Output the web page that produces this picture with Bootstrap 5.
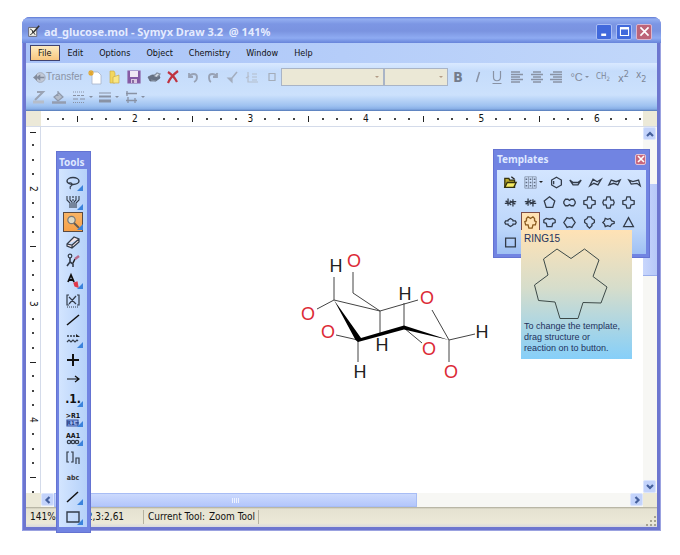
<!DOCTYPE html>
<html lang="en">
<head>
<meta charset="utf-8">
<meta name="viewport" content="width=device-width, initial-scale=1">
<title>ad_glucose.mol - Symyx Draw 3.2</title>
<link href="https://cdn.jsdelivr.net/npm/bootstrap@5.3.0/dist/css/bootstrap.min.css" rel="stylesheet">
<style>
body{font-family:"DejaVu Sans Condensed","DejaVu Sans",sans-serif;font-size:9px;line-height:12px;color:#111;background:#fff;min-height:100vh;padding:17px 19px 24px 22px}
button{border:0;background:none;padding:0;color:inherit;display:flex;align-items:center;justify-content:center}
svg{display:block}
.ic{width:16px;height:16px;fill:none;stroke:#333c4a;stroke-width:1.2;overflow:visible}
.app-window{padding:0 4px 4px;background:#6d76cf;border-radius:8px 8px 0 0;box-shadow:inset 1px 0 #8d9bec,inset -1px -1px #9ba2e0}
.titlebar{height:26px;margin:0 -4px;padding:3px 5px 0 5px;border-radius:8px 8px 0 0;background:linear-gradient(#5c78d4 0,#93aef0 2px,#7c96e4 7px,#7a93e0 14px,#8eabf2 21px,#6784da 26px)}
.titlebar .ic,.transfer .ic{width:13px;height:13px}
.win-title{font:bold 11px/16px "Noto Sans",sans-serif;color:#e4ebff;margin:0;white-space:pre}
.winbtn{width:16px;height:16px;border:1px solid #a9bdf4;border-radius:2px;background:#4169dc}
.winbtn.shut{background:#bd6478;border-color:#d9b6cf}
.menus{height:20px;background:linear-gradient(90deg,#a9c3f8,#c1d7fa);padding:2px 0 2px 4px}
.menus a{color:#111;text-decoration:none;padding:0 7px;border:1px solid transparent;line-height:14px}
.menus a.on{background:linear-gradient(#fdebc0,#f8c77f);border-color:#40426e}
.tools-strip{height:48px;padding:4px 5px 0;background:linear-gradient(#d9e9ff 0,#c5dcfb 8px,#cce1fc 32px,#9dc1f0 43px,#87aee6 46px,#5478b5 48px);color:#8a93a5}
.tools-strip .ic{stroke:#8992a4}
.row-a,.row-b{height:20px}
.transfer{width:54px;font:10px/12px "Liberation Sans",sans-serif}
.set-a{display:grid;grid-template-columns:repeat(10,1fr);width:197px}
.set-b{display:grid;grid-template-columns:repeat(6,1fr) 27px repeat(3,1fr);width:204px}
.pick{appearance:none;height:18px;border:1px solid #a9b4c6;border-radius:0;background:#ebe8d6;opacity:1}
.pick.wide{width:103px}
.pick.slim{width:64px}
.pick-wrap{position:relative}
.pick-wrap::after,.caret-s::after{content:"";border:2px solid transparent;border-top-color:#858ea0;border-bottom:0}
.pick-wrap::after{position:absolute;right:5px;top:8px;pointer-events:none;border-top-color:#b39b86}
.caret-s::after{margin-left:2px}
.glyph{font:11px/16px "Liberation Sans",sans-serif;color:#858d9d}
.ruler-h{height:16px;background:#fff;border-bottom:1px solid #d4dbea}
.corner-box{background:#ece9d8;flex:0 0 auto}
.w15{width:15px}.w14{width:14px}
.ticks{overflow:hidden;font-size:10px;line-height:12px;min-width:0;min-height:0}
.ticks span{display:flex;align-items:center;justify-content:center;min-width:0;min-height:0}
.ticks-h span{flex:0 0 2.4%}
.ticks-v span{flex:0 0 3.95%}
.ticks-v span:first-child{flex-basis:11px}
.ticks span.dot::before{content:"";width:2px;height:2px;background:#444}
.ticks-v span.num{writing-mode:vertical-rl}
.ticks-h span.bar::before{content:"";width:1px;height:6px;background:#222}
.ticks-v span.bar::before{content:"";width:6px;height:1px;background:#222}
.ruler-v{width:15px;background:#fff;border-right:1px solid #d4dbea;flex:0 0 auto}
.workspace{min-height:0;flex-basis:0}
.sheet{background:#fff;min-height:0;min-width:0;overflow:hidden}
.track-v{width:14px;background:#f7f7f4;flex:0 0 auto}
.track-h{height:14px;background:#f7f7f4}
.arrow{width:13px;height:13px;background:#c3d3fb;border:1px solid #dbe5fd;border-radius:2px;flex:0 0 auto}
.arrow .ic{width:8px;height:8px;stroke:#45609c;stroke-width:2.2}
.thumb-v{height:26%;margin-top:44px;background:linear-gradient(90deg,#c8d6fc,#b6c8f8);border-bottom:1px solid #98adeb}
.thumb-h{width:63%;background:linear-gradient(#ccdafd,#b3c6fb);border:1px solid #a8bdf5;gap:1px}
.thumb-h i{width:1px;height:5px;background:#edf2ff}
.status{height:20px;background:linear-gradient(#aaa898 0,#e5e2d1 2px,#ece9d8 16px,#d8d9de 20px);font-size:10px}
.status .cell{border-right:1px solid #b5b2a0;height:14px;line-height:14px;white-space:nowrap}
.cell-zoom{width:118px;padding-left:4px}
.cell-pos{margin-left:31px}
.cell-tool{padding:0 3px 0 4px;width:115px}
.palette{position:absolute;background:#7184e2;border:1px solid #6473d2}
.palette h2{font:bold 10px/14px "Noto Sans",sans-serif;color:#dfe8ff;margin:0}
.pal-tools{left:34px;top:134px;bottom:-2px;width:35px;padding:3px 3px 5px 2px}
.pal-tools .tray{display:grid;grid-template-rows:repeat(18,1fr);padding-top:4px;background:linear-gradient(90deg,#d3e5ff,#b5d1f9)}
.tool{position:relative;min-height:0;width:20px;margin:0 auto}
.tool.more::after{content:"";position:absolute;right:0;bottom:2px;border:3px solid;border-color:transparent #3b83dc #3b83dc transparent}
.tool.on{background:linear-gradient(#f9b566,#f6a048);box-shadow:inset 0 0 0 1px #5a4a42}
.pal-tpl{right:11px;top:132px;width:157px;height:109px;padding:2px 3px 3px}
.pal-tpl .tray{background:linear-gradient(#d3e5ff,#bcd6fa 70%,#9fc0f3);padding:2px 4px 0}
.tpl-row{display:grid;height:20px;width:137px;grid-template-columns:repeat(7,1fr)}
.tpl-row.first{width:143px;grid-template-columns:1fr 26px repeat(5,1fr)}
.tpl-row .ic{width:13px;height:13px;stroke-width:1.6}
.tpl.on{background:#ffe2b4;box-shadow:inset 0 0 0 1px #7a4c48}
.first .caret-s::after{border-top-color:#222}
.closer{width:11px;height:11px;background:#c8677d;border:1px solid #e3c3d5;border-radius:2px}
.tip{position:absolute;right:29px;top:213px;width:111px;height:129px;background:linear-gradient(#ffe2b5,#d6ddcb 45%,#86cff9);color:#23315c;padding:3px 3px 2px;font:9px/11px "Liberation Sans",sans-serif}
.tip svg{width:105px;height:76px;fill:none;stroke:#3d4a48;stroke-width:1}
.tip p{margin:0;white-space:nowrap}
.tip .tip-name{font-size:10px;line-height:12px}
.mol polyline{stroke:#444;stroke-width:1;fill:none}
.mol text{font:18px "Liberation Sans",sans-serif;text-anchor:middle;fill:#222}
.mol .ox{fill:#dc2b36}
</style>
<script src="https://cdn.jsdelivr.net/npm/bootstrap@5.3.0/dist/js/bootstrap.bundle.min.js"></script>
</head>
<body class="d-flex flex-column">
<main class="app-window position-relative flex-grow-1 d-flex flex-column">
  <header class="titlebar d-flex align-items-center">
    <svg class="ic me-1" viewBox="0 0 16 16"><path d="M2 3h10v11H2z" fill="#f4f4ec" stroke="#667"/><path d="M4 5l3 2v3l-3 2M7 8l3 4" stroke="#222"/><path d="M15 1L8 9" stroke="#333" stroke-width="2"/></svg>
    <h1 class="win-title flex-grow-1">ad_glucose.mol - Symyx Draw 3.2  @ 141%</h1>
    <div class="d-flex gap-1 pe-1">
      <button class="winbtn" aria-label="Minimize"><svg class="ic" viewBox="0 0 16 16"><path d="M4 12h6" stroke="#fff" stroke-width="3"/></svg></button>
      <button class="winbtn" aria-label="Maximize"><svg class="ic" viewBox="0 0 16 16"><path d="M3 4v9h10V4" stroke="#fff" stroke-width="1.300"/><path d="M2.400 4h11.200" stroke="#fff" stroke-width="3"/></svg></button>
      <button class="winbtn shut" aria-label="Close"><svg class="ic" viewBox="0 0 16 16"><path d="M3 3l10 10M13 3L3 13" stroke="#fff" stroke-width="2"/></svg></button>
    </div>
  </header>
  <nav class="menus d-flex align-items-center" aria-label="Main menu">
    <a class="on" href="#">File</a><a href="#">Edit</a><a href="#">Options</a><a href="#">Object</a><a href="#">Chemistry</a><a href="#">Window</a><a href="#">Help</a>
  </nav>
  <section class="tools-strip" aria-label="Toolbar">
    <div class="row-a d-flex align-items-center">
      <button class="transfer"><svg class="ic flex-shrink-0" viewBox="0 0 16 16"><circle cx="9" cy="8" r="6" fill="#c2cad8" stroke="#a5adbc"/><path d="M0 8l5-4v3l4-3v3h5v2H9v3L5 9v3z" fill="#828b9c" stroke="none"/></svg>Transfer</button>
      <div class="set-a">
        <button aria-label="New"><svg class="ic" viewBox="0 0 16 16"><path d="M5 3h6l3 3v9H5z" fill="#fff" stroke="#a7b3c9" stroke-width=".8"/><path d="M4 1v6M1 4h6M2 2l4 4M6 2L2 6" stroke="#e3a62b"/></svg></button>
        <button aria-label="Open"><svg class="ic" viewBox="0 0 16 16"><path d="M4 2h4l1 2v10H4z" fill="#f3d75e" stroke="#c9a842" stroke-width=".6"/><path d="M7 14V8l6-2v8z" fill="#f9e784" stroke="#c3a143" stroke-width=".6"/></svg></button>
        <button aria-label="Save"><svg class="ic" viewBox="0 0 16 16"><path d="M2 2h12v12H2z" fill="#8459a4" stroke="#8a5fa6"/><path d="M4 2h8v6H4z" fill="#f0e7f4" stroke="none"/><path d="M5 10h6v4H5z" fill="#d9c7e2" stroke="none"/><path d="M7 11v3" stroke="#543078"/></svg></button>
        <button aria-label="Print"><svg class="ic" viewBox="0 0 16 16"><path d="M2 8l4-2h7l1 3-4 3H4z" fill="#667183" stroke="#5a6371" stroke-width=".7"/><path d="M8 7l3-3 3 1-3 3M5 11l5 1" fill="#dbe2eb" stroke="#8590a1"/></svg></button>
        <button aria-label="Delete"><svg class="ic" viewBox="0 0 16 16"><path d="M3 3c3 2 7 6 9 10M13 2C9 5 5 9 3 14" stroke="#bf3340" stroke-width="2.200"/></svg></button>
        <button aria-label="Undo"><svg class="ic" viewBox="0 0 16 16"><path d="M4 4v4h4M4 8c2-4 8-4 8 0 0 2-1 4-3 5" stroke="#98a2b5" stroke-width="1.800"/></svg></button>
        <button aria-label="Redo"><svg class="ic" viewBox="0 0 16 16"><path d="M12 4v4H8M12 8c-2-4-8-4-8 0 0 2 0 4 2 5" stroke="#98a2b5" stroke-width="1.800"/></svg></button>
        <button aria-label="Clean"><svg class="ic" viewBox="0 0 16 16"><path d="M13 3L8 9" stroke="#a3adbe" stroke-width="1.500"/><path d="M4 9h4v4z" fill="#a3adbe" stroke="#a3adbe"/></svg></button>
        <button aria-label="Paste"><svg class="ic" viewBox="0 0 16 16"><path d="M4 3v10h10M8 5h5M8 8h5M8 11h5M2 9l3-2" stroke="#b4bdcc"/></svg></button>
        <button aria-label="Box"><svg class="ic" viewBox="0 0 16 16"><path d="M5 4.500h6v7H5z" stroke="#a4adba"/></svg></button>
      </div>
      <div class="pick-wrap d-flex"><select class="pick wide" aria-label="Font" disabled></select></div>
      <div class="pick-wrap d-flex ms-auto"><select class="pick slim" aria-label="Font size" disabled></select></div>
      <div class="set-b ms-auto">
        <button aria-label="Bold"><svg class="ic" viewBox="0 0 16 16"><text x="8" y="13" text-anchor="middle" font-size="14" font-weight="bold" fill="#747c8c" stroke="none">B</text></svg></button>
        <button aria-label="Italic"><svg class="ic" viewBox="0 0 16 16"><path d="M9.500 3l-3 10" stroke-width="1.500"/></svg></button>
        <button aria-label="Underline"><svg class="ic" viewBox="0 0 16 16"><path d="M4.500 2v6c0 5 7 5 7 0V2M3.500 14.500h9" stroke-width="1.200"/></svg></button>
        <button aria-label="Align left"><svg class="ic" viewBox="0 0 16 16"><path d="M2 3h9M2 5.500h12M2 8h9M2 10.500h12M2 13h9" stroke-width="1.400"/></svg></button>
        <button aria-label="Align center"><svg class="ic" viewBox="0 0 16 16"><path d="M4 3h8M2 5.500h12M4 8h8M2 10.500h12M4 13h8" stroke-width="1.400"/></svg></button>
        <button aria-label="Align right"><svg class="ic" viewBox="0 0 16 16"><path d="M5 3h9M2 5.500h12M5 8h9M2 10.500h12M5 13h9" stroke-width="1.400"/></svg></button>
        <button class="glyph caret-s">°C</button>
        <button aria-label="Formula"><svg class="ic" viewBox="0 0 16 16"><text x="1" y="10" font-size="8" fill="#7d8697" stroke="none">CH<tspan dy="2" font-size="6">2</tspan></text></svg></button>
        <button aria-label="Superscript"><svg class="ic" viewBox="0 0 16 16"><text x="3" y="13" font-size="11" fill="#7d8697" stroke="none">x<tspan dy="-5" font-size="9">2</tspan></text></svg></button>
        <button aria-label="Subscript"><svg class="ic" viewBox="0 0 16 16"><text x="2" y="9" font-size="10" fill="#7d8697" stroke="none">x<tspan dy="4" font-size="9">2</tspan></text></svg></button>
      </div>
    </div>
    <div class="row-b d-flex align-items-center">
      <button class="me-1" aria-label="Line colour"><svg class="ic" viewBox="0 0 16 16"><path d="M6 3h6l-8 8" stroke="#9aa3b4" stroke-width="2"/><path d="M2 13h11" stroke="#b5bdca" stroke-width="3"/></svg></button>
      <button class="me-1" aria-label="Fill colour"><svg class="ic" viewBox="0 0 16 16"><path d="M7 2v5M3 8l5-4 4 4-5 4z" fill="#b5bdca" stroke="#8f99ab"/><path d="M1 13.500h14" stroke="#949daf" stroke-width="2.500"/></svg></button>
      <button class="caret-s me-1" aria-label="Line style"><svg class="ic" viewBox="0 0 16 16"><path d="M2 3h12M2 13.500h12" stroke-dasharray="1 1"/><path d="M2 6.500h12" stroke-dasharray="3 1"/><path d="M2 10h12" stroke-dasharray="5 2"/></svg></button>
      <button class="caret-s me-1" aria-label="Line width"><svg class="ic" viewBox="0 0 16 16"><path d="M2 4h12" stroke-width="1"/><path d="M2 7.500h12" stroke-width="2"/><path d="M2 12h12" stroke-width="3"/></svg></button>
      <button class="caret-s" aria-label="Arrow style"><svg class="ic" viewBox="0 0 16 16"><path d="M3 4.500h11M3 11.500h11M4 2v5M12 9v5M5 8v6" stroke-width="1.300"/></svg></button>
    </div>
  </section>
  <div class="ruler-h d-flex">
    <div class="corner-box w15"></div>
    <div class="ticks ticks-h d-flex flex-grow-1" id="rulerTop"></div>
    <div class="corner-box w14"></div>
  </div>
  <div class="d-flex flex-grow-1 workspace">
    <div class="ruler-v ticks ticks-v d-flex flex-column" id="rulerLeft"></div>
    <div class="sheet flex-grow-1">
      <svg class="mol w-100 h-100" viewBox="41 127 602 360" preserveAspectRatio="xMinYMin meet" role="img" aria-label="Glucose structure">
        <polyline points="334,277 334,300 317,309"/><polyline points="334,300 380,311 418,300"/>
        <polyline points="353,272 353,293 380,311 380,333"/>
        <polyline points="404,303 404,328 422,343"/><polyline points="432,310 449,340 475,334"/>
        <polyline points="449,340 449,362"/><polyline points="336,335 358,340 358,362"/>
        <path d="M334 300L361 338L404 325.500L449 340L404 329.500L358 342L355.500 340z"/>
        <text x="336" y="272">H</text><text class="ox" x="354" y="267">O</text><text x="405" y="300">H</text><text class="ox" x="427" y="304">O</text>
        <text class="ox" x="308" y="320">O</text><text class="ox" x="328" y="338">O</text><text x="382" y="351">H</text><text class="ox" x="429" y="355">O</text>
        <text x="482" y="338">H</text><text x="360" y="378">H</text><text class="ox" x="451" y="378">O</text>
      </svg>
    </div>
    <div class="track-v d-flex flex-column justify-content-between">
      <div class="d-flex flex-column flex-grow-1"><button class="arrow" aria-label="Scroll up"><svg class="ic" viewBox="0 0 8 8"><path d="M1 6l3-3 3 3"/></svg></button><div class="thumb-v"></div></div>
      <button class="arrow" aria-label="Scroll down"><svg class="ic" viewBox="0 0 8 8"><path d="M1 2l3 3 3-3"/></svg></button>
    </div>
  </div>
  <div class="track-h d-flex">
    <div class="corner-box w15"></div>
    <button class="arrow" aria-label="Scroll left"><svg class="ic" viewBox="0 0 8 8"><path d="M5.500 1l-3 3 3 3"/></svg></button>
    <div class="flex-grow-1 d-flex"><div class="thumb-h d-flex align-items-center justify-content-center"><i></i><i></i><i></i><i></i></div></div>
    <button class="arrow" aria-label="Scroll right"><svg class="ic" viewBox="0 0 8 8"><path d="M2.500 1l3 3-3 3"/></svg></button>
    <div class="corner-box w14"></div>
  </div>
  <footer class="status d-flex align-items-center">
    <div class="cell cell-zoom d-flex"><span>141%</span><span class="cell-pos">2,3:2,61</span></div>
    <div class="cell cell-tool d-flex justify-content-between"><span>Current Tool:</span><span>Zoom Tool</span></div>
    <svg class="ms-auto align-self-end" width="12" height="12" viewBox="0 0 12 12" fill="#a6a391"><path d="M9 1h2v2H9zM9 5h2v2H9zM5 5h2v2H5zM9 9h2v2H9zM5 9h2v2H5zM1 9h2v2H1z"/></svg>
  </footer>

  <aside class="palette pal-tools d-flex flex-column" aria-label="Tools">
    <h2>Tools</h2>
    <div class="tray flex-grow-1">
      <button class="tool more" aria-label="Lasso"><svg class="ic" viewBox="0 0 16 16"><ellipse cx="8" cy="6" rx="6" ry="3.500" stroke-width="1.400"/><path d="M4 8c3-1 4 2 2 3s0 2-1 3"/></svg></button>
      <button class="tool more" aria-label="Rotate"><svg class="ic" viewBox="0 0 16 16"><path d="M2 2v4l3 3v5M5 2v4l2 2v6M14 2v4l-3 3v5M11 2v4l-2 2v6" stroke-width="1.100"/><path d="M8 2v6" stroke-dasharray="2 1"/></svg></button>
      <button class="tool more on" aria-label="Zoom"><svg class="ic" viewBox="0 0 16 16"><circle cx="6.500" cy="6" r="3.700" fill="#ddd9c4" stroke="#777"/><path d="M9 9l5 5" stroke="#665c50" stroke-width="2"/></svg></button>
      <button class="tool" aria-label="Eraser"><svg class="ic" viewBox="0 0 16 16"><path d="M2 10l7-7 5 2v3l-7 6-5-2zM2 10l5 1 7-6M7 11v3" fill="#f4e5e8"/></svg></button>
      <button class="tool" aria-label="Draw"><svg class="ic" viewBox="0 0 16 16"><circle cx="5" cy="3" r="1.800"/><path d="M5 5v4l-3 4M5 9l3 2v3" stroke-width="1.600"/><path d="M8 10l2-4" stroke="#222" stroke-width="1.600"/><path d="M10 6l4-3" stroke="#b8698b" stroke-width="2.500"/></svg></button>
      <button class="tool more" aria-label="Atom"><svg class="ic" viewBox="0 0 16 16"><path d="M3 9l3-7 3 7M4 7h4" stroke="#111" stroke-width="1.800"/><path d="M9 10l3-1 1 5-3-1z" fill="#e03748" stroke="#e03748"/></svg></button>
      <button class="tool" aria-label="Bracket atom"><svg class="ic" viewBox="0 0 16 16"><path d="M4 2H2v10h2M12 2h2v10h-2M4 4l7 7M11 3l-7 8"/><path d="M2 14h12" stroke-dasharray="1 1"/></svg></button>
      <button class="tool" aria-label="Bond"><svg class="ic" viewBox="0 0 16 16"><path d="M2 13L14 3" stroke="#111" stroke-width="1.500"/></svg></button>
      <button class="tool more" aria-label="Bond styles"><svg class="ic" viewBox="0 0 16 16"><path d="M2 4h10" stroke-width="1.500" stroke-dasharray="2 1"/><path d="M11 2l4 3h-4z" fill="#222" stroke="none"/><path d="M2 10l2-2 2 2 2-2 2 2 2-2 1 1"/></svg></button>
      <button class="tool" aria-label="Plus"><svg class="ic" viewBox="0 0 16 16"><path d="M8 2v12M2 8h12" stroke="#111" stroke-width="2"/></svg></button>
      <button class="tool" aria-label="Arrow"><svg class="ic" viewBox="0 0 16 16"><path d="M2 8h12M10 5l4 3-4 3" stroke="#111"/></svg></button>
      <button class="tool more" aria-label="Number"><svg class="ic" viewBox="0 0 16 16"><text x="8" y="12" text-anchor="middle" font-size="12" font-weight="bold" fill="#111" stroke="none">.1.</text></svg></button>
      <button class="tool more" aria-label="R group"><svg class="ic" viewBox="0 0 16 16"><path d="M2 9h11v6H2z" fill="#9db6ee" stroke="#3a559f"/><text x="8" y="7" text-anchor="middle" font-size="7" font-weight="bold" fill="#111" stroke="none">&gt;R1</text><text x="8" y="14" text-anchor="middle" font-size="6" font-weight="bold" fill="#223c86" stroke="none">R1=</text></svg></button>
      <button class="tool more" aria-label="Sequence"><svg class="ic" viewBox="0 0 16 16"><text x="8" y="8" text-anchor="middle" font-size="7" font-weight="bold" fill="#111" stroke="none">AA1</text><circle cx="4" cy="12" r="1.700"/><circle cx="8" cy="12" r="1.700"/><circle cx="12" cy="12" r="1.700"/></svg></button>
      <button class="tool" aria-label="Brackets"><svg class="ic" viewBox="0 0 16 16"><path d="M4 2H2v10h2M6 2h2v10H6M11 14V8h3v6"/></svg></button>
      <button class="tool" aria-label="Text"><svg class="ic" viewBox="0 0 16 16"><text x="8" y="10" text-anchor="middle" font-size="7" font-weight="bold" fill="#333" stroke="none">abc</text></svg></button>
      <button class="tool more" aria-label="Line"><svg class="ic" viewBox="0 0 16 16"><path d="M2 13L13 3" stroke="#111" stroke-width="1.500"/></svg></button>
      <button class="tool more" aria-label="Rectangle"><svg class="ic" viewBox="0 0 16 16"><path d="M2 3h12v10H2z" stroke-width="1.400"/></svg></button>
    </div>
  </aside>

  <aside class="palette pal-tpl d-flex flex-column" aria-label="Templates">
    <div class="d-flex align-items-center justify-content-between pb-1"><h2>Templates</h2><button class="closer" aria-label="Close templates"><svg class="ic" viewBox="0 0 16 16"><path d="M5 5l6 6M11 5l-6 6" stroke="#fff" stroke-width="1.600"/></svg></button></div>
    <div class="tray flex-grow-1">
      <div class="tpl-row first">
        <button class="tpl" aria-label="Open template"><svg class="ic" viewBox="0 0 16 16"><path d="M1 3h5l1 2h6v9H1z" fill="#b9a92c" stroke="#35330f"/><path d="M1 14l3-6h11l-3 6z" fill="#f6ec65" stroke="#35330f"/><path d="M9 1l4 3" stroke="#222"/></svg></button>
        <button class="tpl caret-s" aria-label="Template set"><svg class="ic" viewBox="0 0 16 16"><path d="M1 1h14v14H1zM5.500 1v14M10.500 1v14" stroke="#8290a6" stroke-width="1"/><path d="M2 4h2M7 4h2M12 4h2M2 8h2M7 8h2M12 8h2M2 12h2M7 12h2M12 12h2" stroke="#5f6b80"/></svg></button>
        <button class="tpl" aria-label="Hexagon"><svg class="ic" viewBox="0 0 16 16"><path d="M8 1.500l6 3.500v6l-6 3.500L2 11V5zM4.500 10V6"/></svg></button>
        <button class="tpl" aria-label="Boat"><svg class="ic" viewBox="0 0 16 16"><path d="M1 5l4 6h6l4-6-4 3H5z"/></svg></button>
        <button class="tpl" aria-label="Chair 1"><svg class="ic" viewBox="0 0 16 16"><path d="M1 12l4-8 5 3 5-3-4 7-5-2z"/></svg></button>
        <button class="tpl" aria-label="Chair 2"><svg class="ic" viewBox="0 0 16 16"><path d="M1 11l3-6 6 2 5-2-3 6-5-2z"/></svg></button>
        <button class="tpl" aria-label="Chair 3"><svg class="ic" viewBox="0 0 16 16"><path d="M1 5l5 2 7-2 2 7-4-3-7 1z"/></svg></button>
      </div>
      <div class="tpl-row">
        <button class="tpl" aria-label="Chair 4"><svg class="ic" viewBox="0 0 16 16"><path d="M1 9h5l4-2h5M5 3v9M11 4v9M2 6l7 5M7 6l7 4"/></svg></button>
        <button class="tpl" aria-label="Chair 5"><svg class="ic" viewBox="0 0 16 16"><path d="M1 7h5l4 2h5M5 3v9M11 4v9M2 10l7-5M7 10l7-4"/></svg></button>
        <button class="tpl" aria-label="Pentagon"><svg class="ic" viewBox="0 0 16 16"><path d="M8 1l6.500 5L12 14H4L1.500 6z"/></svg></button>
        <button class="tpl" aria-label="Ring 8"><svg class="ic" viewBox="0 0 16 16"><path d="M3 4h3l2 1.500L10 4h3l2 3v2l-2 3h-3l-2-1.500L6 12H3L1 9V7z"/></svg></button>
        <button class="tpl" aria-label="Ring 10"><svg class="ic" viewBox="0 0 16 16"><path d="M6 1h4l1 4 4 1v4l-4 1-1 4H6l-1-4-4-1V6l4-1z"/></svg></button>
        <button class="tpl" aria-label="Ring 11"><svg class="ic" viewBox="0 0 16 16"><path d="M6 1h4l1 4h3l1 3-1 3h-3l-1 4H6l-1-4H2L1 8l1-3h3z"/></svg></button>
        <button class="tpl" aria-label="Ring 12"><svg class="ic" viewBox="0 0 16 16"><path d="M6 1h4l1 4 4 1v4l-4 1-1 4H6l-1-4-4-1V6l4-1z"/></svg></button>
      </div>
      <div class="tpl-row">
        <button class="tpl" aria-label="Ring 13"><svg class="ic" viewBox="0 0 16 16"><path d="M5 5l3-2 3 2v1l3 0 1 2-1 2h-3v1l-3 2-3-2v-1H2L1 8l1-2h3z"/></svg></button>
        <button class="tpl on" aria-label="RING15" aria-describedby="tipRing"><svg class="ic" viewBox="0 0 16 16"><path d="M6 15l-1-4H2L1 7l2-1V3l2-2 3 2 3-2 2 2v3l2 1-1 4h-3l-1 4z" stroke="#8a5a1f"/></svg></button>
        <button class="tpl" aria-label="Ring 14"><svg class="ic" viewBox="0 0 16 16"><path d="M1 5l3-2 4 1 4-1 3 2v3l-3 1-1 4H5L4 9 1 8z"/></svg></button>
        <button class="tpl" aria-label="Ring 16"><svg class="ic" viewBox="0 0 16 16"><path d="M5 2l3 1 3-1 2 3 2 3-2 3-2 3-3-1-3 1-2-3-2-3 2-3z"/></svg></button>
        <button class="tpl" aria-label="Ring 17"><svg class="ic" viewBox="0 0 16 16"><path d="M6 1h4l1 2 3 2v3l-3 2v2l-3 3-3-3v-2L2 8V5l3-2z"/></svg></button>
        <button class="tpl" aria-label="Ring 18"><svg class="ic" viewBox="0 0 16 16"><path d="M4 3l3 1 3-1 2 3 3 1v2l-3 1-2 3-3-1-3 1-1-3-2-2 2-2z"/></svg></button>
        <button class="tpl" aria-label="Triangle"><svg class="ic" viewBox="0 0 16 16"><path d="M8 2l6 11H2z"/></svg></button>
      </div>
      <div class="tpl-row">
        <button class="tpl" aria-label="Square"><svg class="ic" viewBox="0 0 16 16"><path d="M2 2.500h12v11H2z"/></svg></button>
      </div>
    </div>
  </aside>
  <div class="tip" id="tipRing" role="tooltip">
    <p class="tip-name">RING15</p>
    <svg viewBox="524 245 105 76"><path d="M557 249L571 258.500L584.500 249L599 260L593 276.500L607 287L601 303L583 302.500L578 318.500H560L555 302L538.500 300.500L534.500 285L548 275L543.500 259z"/></svg>
    <p>To change the template,</p><p>drag structure or</p><p>reaction on to button.</p>
  </div>
</main>
<script>
// Fills a ruler with eighth-unit ticks: numbers on units, bars on halves.
function fillRuler(id, count, firstEighth) {
  const el = document.getElementById(id);
  for (let i = 0; i < count; i++) {
    const n = firstEighth + i, s = document.createElement('span');
    if (n % 8 === 0) { s.className = 'num'; s.textContent = n / 8; }
    else s.className = n % 4 === 0 ? 'bar' : 'dot';
    el.appendChild(s);
  }
}
fillRuler('rulerTop', 42, 10);
fillRuler('rulerLeft', 26, 12);
</script>
</body>
</html>
